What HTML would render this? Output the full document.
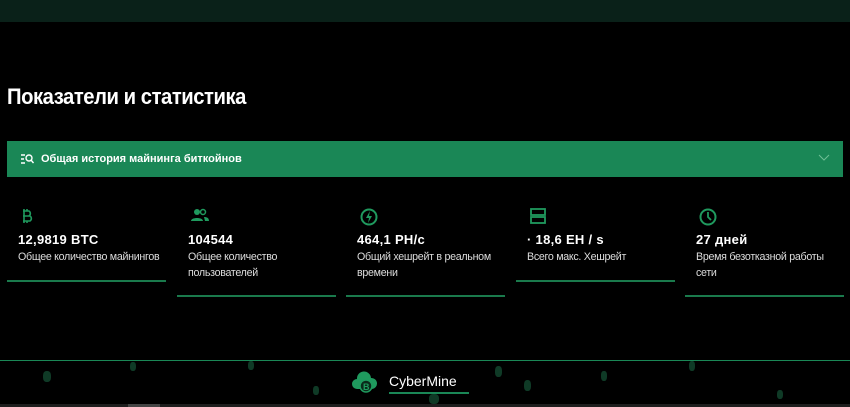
<!DOCTYPE html>
<html><head><meta charset="utf-8"><style>
*{margin:0;padding:0;box-sizing:border-box}
body{width:850px;height:407px;background:#000;overflow:hidden;position:relative;font-family:"Liberation Sans",sans-serif;color:#fff}
.top{position:absolute;left:0;top:0;width:850px;height:22px;background:#0a2119}
h1{position:absolute;left:7px;top:84px;font-size:22px;font-weight:bold;letter-spacing:-0.5px;transform:scaleX(0.92);transform-origin:left}
.bar{position:absolute;left:7px;top:141px;width:836px;height:36px;background:#1a8756}
.bar span{position:absolute;left:34px;top:12px;font-size:11px;font-weight:bold}
.card{position:absolute;width:159px}
.card svg{position:absolute;left:14px;top:8px}
.v{position:absolute;left:11px;top:32px;font-size:13px;font-weight:bold;letter-spacing:0.3px;white-space:nowrap}
.l{position:absolute;left:11px;top:49px;font-size:11px;line-height:16px;color:#ddd;width:175px;letter-spacing:-0.3px;transform:scaleX(0.97);transform-origin:left;white-space:nowrap}
.u{position:absolute;left:0;width:159px;height:2px;background:#1a7a4c}
.dot{position:absolute;background:#0f3a26;border-radius:40%}
</style></head><body>
<div class="top"></div>
<h1>Показатели и статистика</h1>
<div class="bar">
<svg style="position:absolute;left:13px;top:12px" width="14" height="12" viewBox="0 0 14 12"><path d="M1 2h4M1 6h3M1 10h4" stroke="#fff" stroke-width="1.4"/><circle cx="9" cy="5" r="3" fill="none" stroke="#fff" stroke-width="1.4"/><path d="M11 7l2.5 3" stroke="#fff" stroke-width="1.4"/></svg>
<span>Общая история майнинга биткойнов</span>
<svg style="position:absolute;left:811px;top:13px" width="12" height="8"><path d="M1 1l5 5 5-5" stroke="#6fbf95" fill="none"/></svg>
</div>
<div class="card" style="left:7px;top:200px"><svg width="12" height="16" viewBox="0 0 12 16"><path d="M3 1v14M6 1v2M6 13v2M2 3h6a3 3 0 0 1 0 5H2M2 8h7a3 3 0 0 1 0 5H2" stroke="#1f9a5e" stroke-width="1.6" fill="none"/></svg><div class="v">12,9819 BTC</div><div class="l">Общее количество майнингов</div><div class="u" style="top:80px"></div></div>
<div class="card" style="left:177px;top:200px"><svg width="18" height="14" viewBox="0 0 18 14"><circle cx="6" cy="4" r="3" fill="#1f9a5e"/><circle cx="12" cy="4" r="2.5" fill="none" stroke="#1f9a5e" stroke-width="1.5"/><path d="M0 13c0-4 12-4 12 0zM13 9c3 0 5 1 5 4h-4z" fill="#1f9a5e"/></svg><div class="v">104544</div><div class="l">Общее количество<br>пользователей</div><div class="u" style="top:95px"></div></div>
<div class="card" style="left:346px;top:200px"><svg width="18" height="18" viewBox="0 0 18 18"><circle cx="9" cy="9" r="7.5" fill="none" stroke="#1f9a5e" stroke-width="2"/><path d="M10 3l-4 7h3l-1 5 4-7h-3z" fill="#1f9a5e"/></svg><div class="v">464,1 PH/c</div><div class="l">Общий хешрейт в реальном<br>времени</div><div class="u" style="top:95px"></div></div>
<div class="card" style="left:516px;top:200px"><svg width="16" height="16" viewBox="0 0 16 16"><rect x="1" y="1" width="14" height="6" fill="none" stroke="#1f9a5e" stroke-width="1.8"/><rect x="1" y="9" width="14" height="6" fill="none" stroke="#1f9a5e" stroke-width="1.8"/></svg><div class="v">· 18,6 EH / s</div><div class="l">Всего макс. Хешрейт</div><div class="u" style="top:80px"></div></div>
<div class="card" style="left:685px;top:200px"><svg width="18" height="18" viewBox="0 0 18 18"><circle cx="9" cy="9" r="7.5" fill="none" stroke="#1f9a5e" stroke-width="2"/><path d="M9 4v5l3 3" stroke="#1f9a5e" stroke-width="1.8" fill="none"/></svg><div class="v">27 дней</div><div class="l">Время безотказной работы<br>сети</div><div class="u" style="top:95px"></div></div>
<div style="position:absolute;left:0;top:360px;width:850px;height:1px;background:#1a8756"></div>
<div class="dot" style="left:43px;top:371px;width:8px;height:11px"></div>
<div class="dot" style="left:130px;top:362px;width:6px;height:9px"></div>
<div class="dot" style="left:248px;top:361px;width:6px;height:9px"></div>
<div class="dot" style="left:313px;top:386px;width:6px;height:9px"></div>
<div class="dot" style="left:495px;top:366px;width:7px;height:11px"></div>
<div class="dot" style="left:524px;top:380px;width:7px;height:11px"></div>
<div class="dot" style="left:601px;top:371px;width:6px;height:10px"></div>
<div class="dot" style="left:689px;top:361px;width:6px;height:10px"></div>
<div class="dot" style="left:777px;top:390px;width:6px;height:9px"></div>
<div class="dot" style="left:429px;top:394px;width:10px;height:10px"></div>
<svg style="position:absolute;left:352px;top:371px" width="26" height="24" viewBox="0 0 26 24"><path d="M5 18a5 5 0 0 1 0-10 7 7 0 0 1 14-1 5 5 0 0 1 1 11z" fill="#1f9a5e"/><circle cx="14" cy="15" r="6" fill="#0a2a1a" stroke="#1f9a5e" stroke-width="1.5"/><text x="11" y="19" font-size="9" font-weight="bold" fill="#1f9a5e" font-family="Liberation Sans">B</text></svg>
<div style="position:absolute;left:389px;top:373px;font-size:14px;color:#fff">CyberMine</div>
<div style="position:absolute;left:389px;top:392px;width:80px;height:2px;background:#1a8756"></div>
<div style="position:absolute;left:0;top:404px;width:850px;height:3px;background:#1e1e1e"></div>
<div style="position:absolute;left:128px;top:404px;width:32px;height:3px;background:#444"></div>
</body></html>
